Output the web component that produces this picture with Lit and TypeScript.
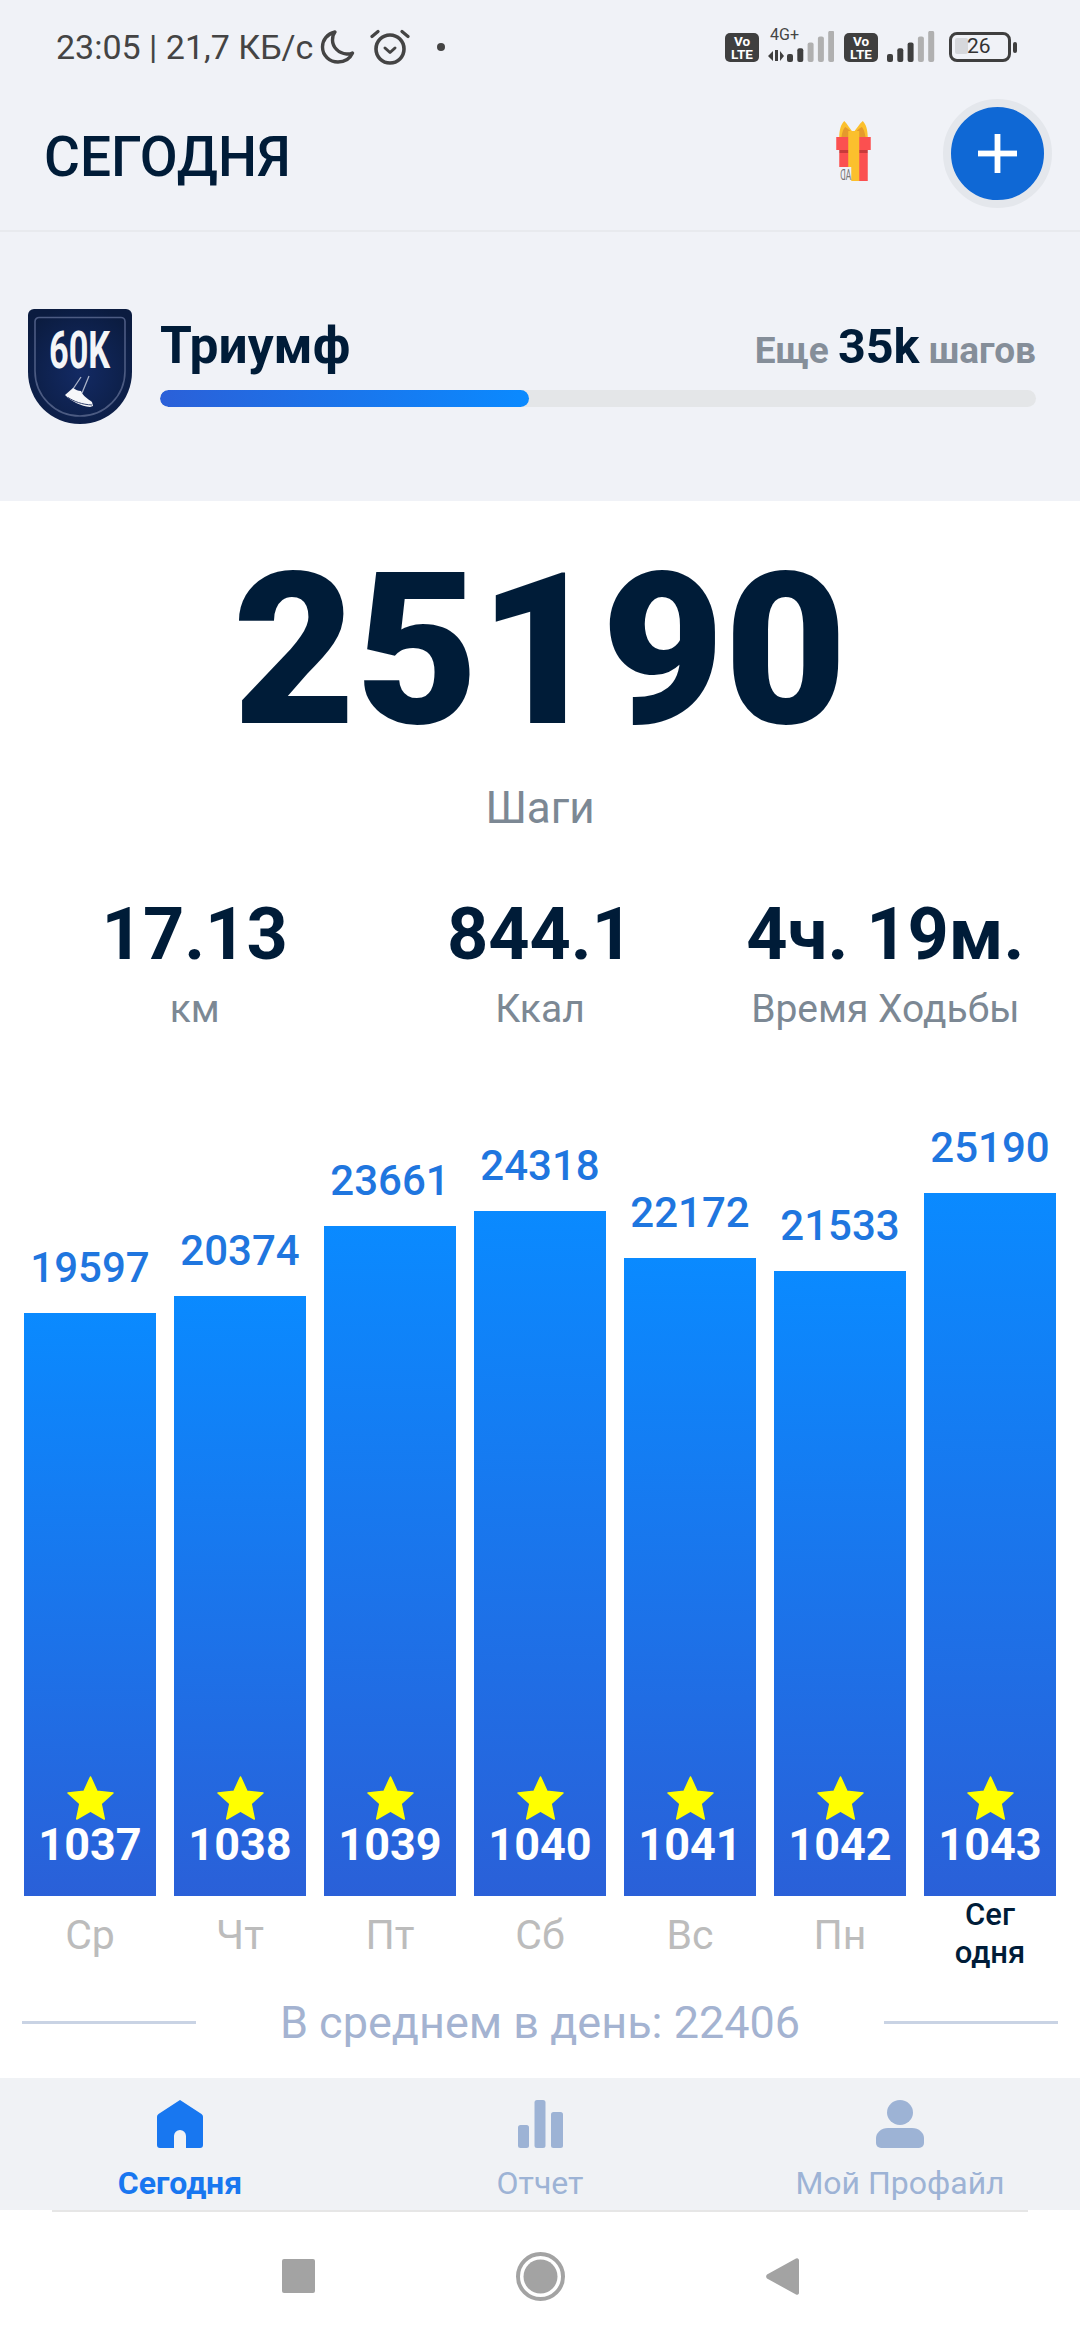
import { LitElement, css, html, svg } from "lit";
import { customElement } from "lit/decorators.js";

const DAYS = [
  { steps: 19597, height: 583, num: 1037, label: "Ср" },
  { steps: 20374, height: 600, num: 1038, label: "Чт" },
  { steps: 23661, height: 670, num: 1039, label: "Пт" },
  { steps: 24318, height: 685, num: 1040, label: "Сб" },
  { steps: 22172, height: 638, num: 1041, label: "Вс" },
  { steps: 21533, height: 625, num: 1042, label: "Пн" },
  { steps: 25190, height: 703, num: 1043, label: "Сег одня", today: true },
];

const STATS = [
  { value: "17.13", label: "км" },
  { value: "844.1", label: "Ккал" },
  { value: "4ч. 19м.", label: "Время Ходьбы" },
];

const moon = svg`<svg class="moon" width="36" height="36" viewBox="0 0 36 36" fill="none" stroke="#444" stroke-width="3.4" stroke-linecap="round" stroke-linejoin="round"><path d="M15 3C7 5 2.500 11 2.500 18c0 8.500 7 15 15.500 15 6.500 0 12-3.500 14.500-9-2 1-4 1.200-6 1-8-.5-14-7-14-14 0-3 .8-6 2.500-8z"/></svg>`;

const alarm = svg`<svg class="alarm" width="40" height="38" viewBox="0 0 40 38" fill="none" stroke="#444" stroke-linecap="round" stroke-linejoin="round"><circle cx="20" cy="21" r="14" stroke-width="3.600"/><path d="M15 20l5 4.500 5-4.500" stroke-width="3"/><path d="M2 8.500 8 3.500M38 8.500 32 3.500" stroke-width="3.200"/></svg>`;

const bars = (levels: string[]) =>
  levels.map((fill, i) => {
    const h = 8 + i * 5.8;
    return svg`<rect x=${i * 10.3} y=${31 - h} width="6" height=${h} rx="2" fill=${fill}/>`;
  });

const signal4g = svg`<svg width="66" height="32" viewBox="0 0 66 32"><path d="M0 25l5-5v10zM7 19h3v11H7zM12 20l4 5-4 5z" fill="#3f3f3f"/><g transform="translate(19 0)">${bars(["#3f3f3f", "#3f3f3f", "#b0b0b0", "#b0b0b0", "#b0b0b0"])}</g></svg>`;

const signal = svg`<svg width="48" height="32" viewBox="0 0 48 32">${bars(["#3f3f3f", "#3f3f3f", "#3f3f3f", "#b0b0b0", "#b0b0b0"])}</svg>`;

const plus = svg`<svg width="39" height="39" viewBox="0 0 39 39" fill="#fff"><rect x="16.600" y="0" width="5.800" height="39"/><rect x="0" y="16.600" width="39" height="5.800"/></svg>`;

const gift = svg`<svg class="gift-icon" width="35" height="60" viewBox="0 0 34.500 60">
  <path d="M3 17C3 8 5 3 8 0c3 3 6 8 9 12 3-4 6-9 9.500-12 3 3 5 8 5 17z" fill="#fbc02d"/>
  <path d="M5 17c1-6 2-9 4-11 3 2 6 4 8 7 3-3 5-5 8.500-7 2 2 3 5 4 11z" fill="#e59a2c"/>
  <rect x="0" y="16" width="34.500" height="13" fill="#fb5050"/>
  <rect x="3" y="29" width="28.500" height="3" fill="#c83a3a"/>
  <rect x="3" y="32" width="28.500" height="28" fill="#fb5050"/>
  <rect x="12" y="10" width="11" height="50" fill="#fbc02d"/>
  <rect x="2" y="46" width="13" height="14" fill="#f0f2f7"/>
  <text transform="translate(15 59) scale(-.57 1)" font-family="Roboto, sans-serif" font-size="15" fill="#777">AD</text>
</svg>`;

const star = svg`<svg width="47" height="44" viewBox="0 0 47 44"><path d="M23.500 1l6.500 14.200 16 1.800-11.900 10.700 3.200 15.300-13.800-7.800-13.800 7.800 3.200-15.300L1 17l16-1.800z" fill="#ffff00" stroke="#ffff00" stroke-width="1.500" stroke-linejoin="round"/></svg>`;

const badge = svg`<svg class="badge" width="104" height="115" viewBox="0 0 104 115">
  <defs><radialGradient id="bg" cx="50%" cy="55%" r="60%"><stop offset="0" stop-color="#132a64"/><stop offset="1" stop-color="#0b1c40"/></radialGradient></defs>
  <path d="M6 0h92a6 6 0 0 1 6 6v57c0 29-23 52-52 52S0 92 0 63V6a6 6 0 0 1 6-6z" fill="url(#bg)"/>
  <path d="M11 8.500h82a4 4 0 0 1 4 4V62c0 25-20 45-45 45S7 87 7 62V12.500a4 4 0 0 1 4-4z" fill="none" stroke="#4c5b82" stroke-width="1.600"/>
  <text transform="translate(21 59) scale(.66 1)" font-family="Roboto, sans-serif" font-weight="700" font-size="52" fill="#f4f5f7">60K</text>
  <path d="M53 68 45 80M61 67 54 84" stroke="#aab3c8" stroke-width="1.300" fill="none"/>
  <path d="M37 86l8-7c3 2 5 3 8 3 2 5 7 8 11 11l1 4-3 1c-9-1-18-5-25-12z" fill="#f6f7f9"/>
  <path d="M40 88.500c6 4 14 7 24 7.500" stroke="#33426e" stroke-width="1" fill="none"/>
</svg>`;

const navHome = svg`<svg width="46" height="48" viewBox="0 0 46 48"><path d="M23 0l21.500 14c1 .8 1.500 1.800 1.500 3v28a3 3 0 0 1-3 3H29V36a6 6 0 0 0-12 0v12H3a3 3 0 0 1-3-3V17c0-1.200.5-2.200 1.500-3z" fill="#1877f0"/></svg>`;

const navChart = svg`<svg width="45" height="48" viewBox="0 0 45 48"><g fill="#9db3d5"><rect x="0" y="25" width="11" height="23" rx="2.500"/><rect x="16.500" y="0" width="11" height="48" rx="2.500"/><rect x="33" y="12" width="12" height="36" rx="2.500"/></g></svg>`;

const navUser = svg`<svg width="48" height="48" viewBox="0 0 48 48"><g fill="#9db3d5"><ellipse cx="24" cy="12.500" rx="13" ry="12.500"/><path d="M12 28h24c7 0 12 5 12 10v5a5 5 0 0 1-5 5H5a5 5 0 0 1-5-5v-5c0-5 5-10 12-10z"/></g></svg>`;

const NAV = [
  { icon: navHome, label: "Сегодня", active: true },
  { icon: navChart, label: "Отчет" },
  { icon: navUser, label: "Мой Профайл" },
];

@customElement("app-root")
export class AppRoot extends LitElement {
  static styles = css`
    * {
      box-sizing: border-box;
    }

    :host {
      display: flex;
      flex-direction: column;
      width: 1080px;
      height: 2340px;
      overflow: hidden;
      background: #fff;
      font-family: Roboto, "Noto Sans", sans-serif;
      color: #001c38;
    }

    .top {
      background: #f0f2f7;
      height: 501px;
      display: flex;
      flex-direction: column;
      flex: none;
    }

    .status {
      height: 94px;
      padding: 0 63px 0 56px;
      display: flex;
      align-items: center;
      color: #444;
      font-size: 34px;
      flex: none;
    }
    .status-left {
      display: flex;
      align-items: center;
    }
    .moon {
      margin-left: 7px;
    }
    .alarm {
      margin-left: 14px;
    }
    .dot {
      width: 8px;
      height: 8px;
      border-radius: 50%;
      background: #444;
      margin-left: 27px;
    }
    .status-right {
      margin-left: auto;
      display: flex;
      align-items: center;
    }
    .volte {
      width: 34px;
      height: 29px;
      border-radius: 5px;
      background: #3f3f3f;
      color: #fff;
      font-size: 13.500px;
      line-height: 13px;
      font-weight: 700;
      text-align: center;
      padding-top: 2px;
    }
    .net {
      position: relative;
      margin-left: 9px;
      margin-right: 10px;
      width: 66px;
      height: 32px;
    }
    .net span {
      position: absolute;
      left: 2px;
      top: -4px;
      font-size: 16px;
      line-height: 16px;
    }
    .sig {
      margin-left: 9px;
      margin-right: 14px;
      height: 32px;
    }
    .battery {
      position: relative;
      width: 62px;
      height: 30px;
      border: 3.500px solid #3f3f3f;
      border-radius: 8px;
      font-size: 21px;
      line-height: 23px;
      color: #333;
      padding-left: 15px;
    }
    .battery i {
      position: absolute;
      left: 3px;
      top: 3px;
      width: 13px;
      height: 16px;
      background: #d6d8dc;
      border-radius: 2px;
    }
    .battery b {
      position: relative;
      font-weight: 400;
    }
    .tip {
      width: 4px;
      height: 11px;
      margin-left: 2px;
      background: #3f3f3f;
      border-radius: 2px;
    }

    .header {
      height: 138px;
      flex: none;
      display: flex;
      align-items: center;
      padding: 0 28px 18px 44px;
      border-bottom: 2px solid #e8eaee;
    }
    h1 {
      margin: 7px 0 0;
      font-size: 55px;
      font-weight: 500;
      color: #001c38;
    }
    .gift {
      margin-left: auto;
      margin-right: 72px;
      margin-top: -4px;
      display: flex;
    }
    .gift-icon {
      overflow: visible;
    }
    .add {
      width: 109px;
      height: 109px;
      border-radius: 50%;
      background: #0f68d5;
      border: 8px solid #e4e7ec;
      display: flex;
      align-items: center;
      justify-content: center;
    }

    .goal {
      flex: 1;
      display: flex;
      align-items: flex-start;
      padding: 77px 44px 0 28px;
    }
    .goal-body {
      flex: 1;
      margin-left: 28px;
      display: flex;
      flex-direction: column;
    }
    .goal-row {
      display: flex;
      align-items: baseline;
      justify-content: space-between;
      height: 64px;
      padding-top: 6px;
    }
    .goal-title {
      font-size: 51.500px;
      font-weight: 700;
      color: #001c38;
    }
    .goal-left {
      font-size: 37px;
      font-weight: 700;
      color: #858e99;
    }
    .goal-left b {
      font-size: 48.500px;
      font-weight: 700;
      color: #001c38;
    }
    .track {
      margin-top: 17px;
      height: 17px;
      border-radius: 9px;
      background: #e4e6e8;
      overflow: hidden;
    }
    .fill {
      height: 100%;
      width: 369px;
      border-radius: 9px;
      background: linear-gradient(90deg, #2b60d8, #0a8aff);
    }

    .summary {
      display: flex;
      flex-direction: column;
      align-items: center;
      flex: none;
    }
    .total {
      margin-top: 22px;
      font-size: 212px;
      line-height: 256px;
      font-weight: 900;
      color: #001c38;
    }
    .total-label {
      margin-top: 3px;
      font-size: 44px;
      line-height: 52px;
      color: #7c8894;
    }
    .stats {
      align-self: stretch;
      margin-top: 60px;
      padding: 0 22px;
      display: grid;
      grid-template-columns: repeat(3, 1fr);
      text-align: center;
    }
    .stat-value {
      font-size: 72px;
      line-height: 82px;
      font-weight: 700;
      color: #001c38;
      white-space: nowrap;
    }
    .stat-label {
      margin-top: 11px;
      font-size: 39px;
      line-height: 44px;
      color: #7c8894;
      white-space: nowrap;
    }

    .chart {
      flex: 1;
      height: 0;
      padding: 0 24px;
      display: flex;
      justify-content: space-between;
      align-items: flex-end;
    }
    .day {
      width: 132px;
      display: flex;
      flex-direction: column;
      align-items: center;
    }
    .steps {
      font-size: 42px;
      font-weight: 500;
      line-height: 48px;
      margin-bottom: 21px;
      color: #1f76df;
    }
    .bar {
      width: 100%;
      display: flex;
      flex-direction: column;
      justify-content: flex-end;
      align-items: center;
      padding-bottom: 28px;
      background: linear-gradient(180deg, #0a8aff 0%, #2a60d8 100%);
    }
    .num {
      margin-top: 2px;
      font-size: 45px;
      line-height: 46px;
      font-weight: 700;
      color: #fff;
    }
    .star {
      display: flex;
    }
    .day-label {
      height: 70px;
      width: 100%;
      display: flex;
      align-items: center;
      justify-content: center;
      text-align: center;
      padding-top: 8px;
      font-size: 41px;
      color: #bcbcbc;
    }
    .day-label.today {
      padding: 5px 30px 0;
      font-size: 31px;
      line-height: 38px;
      font-weight: 500;
      color: #001c38;
    }

    .avg {
      flex: none;
      height: 112px;
      padding: 0 22px;
      display: flex;
      align-items: center;
      justify-content: space-between;
      font-size: 45px;
      color: #a4b3d1;
    }
    .avg i {
      width: 174px;
      height: 3px;
      background: #c9d3e4;
    }

    nav {
      flex: none;
      height: 132px;
      background: #f0f2f5;
      display: grid;
      grid-template-columns: repeat(3, 1fr);
    }
    .tab {
      display: flex;
      flex-direction: column;
      align-items: center;
      padding-top: 22px;
      font-size: 32px;
      line-height: 36px;
      color: #9db3d5;
    }
    .tab svg {
      display: block;
      margin-bottom: 17px;
    }
    .tab.active {
      color: #1877f0;
      font-weight: 700;
    }

    .softkeys {
      flex: none;
      height: 130px;
      margin: 0 52px;
      border-top: 2px solid #e6e6e6;
      display: flex;
      align-items: center;
      justify-content: center;
      gap: 201px;
    }
    .softkeys svg {
      display: block;
    }
  `;

  render() {
    return html`
      <section class="top">
        <div class="status">
          <div class="status-left">
            <span>23:05 | 21,7 КБ/с</span>${moon}${alarm}<span class="dot"></span>
          </div>
          <div class="status-right">
            <div class="volte">Vo<br />LTE</div>
            <div class="net"><span>4G+</span>${signal4g}</div>
            <div class="volte">Vo<br />LTE</div>
            <div class="sig">${signal}</div>
            <div class="battery"><i></i><b>26</b></div>
            <div class="tip"></div>
          </div>
        </div>
        <header class="header">
          <h1>СЕГОДНЯ</h1>
          <div class="gift">${gift}</div>
          <div class="add">${plus}</div>
        </header>
        <div class="goal">
          ${badge}
          <div class="goal-body">
            <div class="goal-row">
              <span class="goal-title">Триумф</span>
              <span class="goal-left">Еще <b>35k</b> шагов</span>
            </div>
            <div class="track"><div class="fill"></div></div>
          </div>
        </div>
      </section>

      <section class="summary">
        <div class="total">25190</div>
        <div class="total-label">Шаги</div>
        <div class="stats">
          ${STATS.map(
            (s) => html`<div>
              <div class="stat-value">${s.value}</div>
              <div class="stat-label">${s.label}</div>
            </div>`
          )}
        </div>
      </section>

      <section class="chart">
        ${DAYS.map(
          (d) => html`<div class="day">
            <div class="steps">${d.steps}</div>
            <div class="bar" style="height: ${d.height}px">
              <div class="star">${star}</div>
              <div class="num">${d.num}</div>
            </div>
            <div class="day-label ${d.today ? "today" : ""}">${d.label}</div>
          </div>`
        )}
      </section>

      <div class="avg">
        <i></i>
        <span>В среднем в день: 22406</span>
        <i></i>
      </div>

      <nav>
        ${NAV.map(
          (t) => html`<div class="tab ${t.active ? "active" : ""}">
            ${t.icon}<span>${t.label}</span>
          </div>`
        )}
      </nav>

      <div class="softkeys">
        <svg width="33" height="34" viewBox="0 0 33 34"><rect width="33" height="34" rx="2" fill="#a3a3a3" /></svg>
        <svg width="49" height="49" viewBox="0 0 49 49">
          <circle cx="24.500" cy="24.500" r="22.500" fill="none" stroke="#a3a3a3" stroke-width="4" />
          <circle cx="24.500" cy="24.500" r="17" fill="#a3a3a3" />
        </svg>
        <svg width="33" height="37" viewBox="0 0 33 37"><path d="M1 20.500a3 3 0 0 1 0-4L30 .5a2 2 0 0 1 3 1.500v33a2 2 0 0 1-3 1.500z" fill="#a3a3a3" /></svg>
      </div>
    `;
  }
}
